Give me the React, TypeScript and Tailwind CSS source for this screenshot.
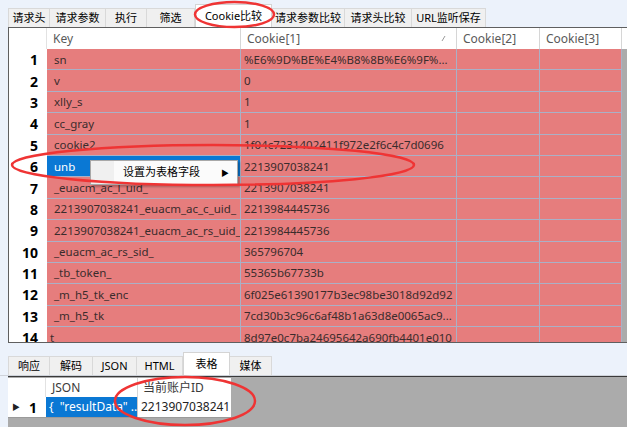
import React from "react";

const topTabs = [
  { label: "请求头", w: "w-[42px]" },
  { label: "请求参数", w: "w-[56px]" },
  { label: "执行", w: "w-[41px]" },
  { label: "筛选", w: "w-[48px]" },
  { label: "Cookie比较", w: "w-[77px]", active: true },
  { label: "请求参数比较", w: "w-[73px]" },
  { label: "请求头比较", w: "w-[67px]" },
  { label: "URL监听保存", w: "w-[74px]" },
];

const bottomTabs = [
  { label: "响应", w: "w-[42px]" },
  { label: "解码", w: "w-[43px]" },
  { label: "JSON", w: "w-[44px]" },
  { label: "HTML", w: "w-[46px]" },
  { label: "表格", w: "w-[47px]", active: true },
  { label: "媒体", w: "w-[42px]" },
];

const rows: [string, string][] = [
  ["sn", "%E6%9D%BE%E4%B8%8B%E6%9F%..."],
  ["v", "0"],
  ["xlly_s", "1"],
  ["cc_gray", "1"],
  ["cookie2", "1f04c7231402411f972e2f6c4c7d0696"],
  ["unb", "2213907038241"],
  ["_euacm_ac_l_uid_", "2213907038241"],
  ["2213907038241_euacm_ac_c_uid_", "2213984445736"],
  ["2213907038241_euacm_ac_rs_uid_", "2213984445736"],
  ["_euacm_ac_rs_sid_", "365796704"],
  ["_tb_token_", "55365b67733b"],
  ["_m_h5_tk_enc", "6f025e61390177b3ec98be3018d92d92"],
  ["_m_h5_tk", "7cd30b3c96c6af48b1a63d8e0065ac9..."],
  ["t", "8d97e0c7ba24695642a690fb4401e010"],
];

function Tab({ label, w, active }: { label: string; w: string; active?: boolean }) {
  if (active) {
    return (
      <div
        className={`${w} h-[23px] bg-white border border-b-0 border-[#d4d4d4] flex items-center justify-center text-[11px] text-black relative z-10`}
      >
        {label}
      </div>
    );
  }
  return (
    <div
      className={`${w} h-[19px] bg-[#f0f0f0] border border-b-0 border-l-0 first:border-l border-[#d9d9d9] flex items-center justify-center text-[11px] text-black`}
    >
      {label}
    </div>
  );
}

function SortMark() {
  return (
    <svg width="5" height="7" viewBox="0 0 5 7" className="mr-[10px]">
      <line x1="1" y1="6" x2="4" y2="1" stroke="#9a9a9a" strokeWidth="1" />
    </svg>
  );
}

export default function App() {
  return (
    <div className="w-[627px] h-[427px] bg-[#ecf2fb] relative overflow-hidden flex flex-col font-['Noto_Sans','Noto_Sans_CJK_SC',sans-serif]">
      {/* top tabs */}
      <div className="h-[27px] flex items-end pl-[8px] shrink-0">
        {topTabs.map((t) => (
          <Tab key={t.label} {...t} />
        ))}
      </div>

      {/* cookie grid */}
      <div className="ml-[8px] h-[316px] shrink-0 border-t border-l border-b border-[#5f5f5f] bg-[#ababab] overflow-hidden">
        <div className="flex h-[21px] bg-white text-[12px] text-[#5a5a5a]">
          <div className="w-[38px] border-r border-[#e2e2e2]" />
          <div className="w-[194px] border-r border-[#d6d6d6] flex items-center pl-[6px]">Key</div>
          <div className="w-[216px] border-r border-[#d6d6d6] flex items-center justify-between pl-[6px]">
            <span>Cookie[1]</span>
            <SortMark />
          </div>
          <div className="w-[83px] border-r border-[#d6d6d6] flex items-center pl-[6px]">Cookie[2]</div>
          <div className="w-[82px] border-r border-[#d6d6d6] flex items-center pl-[6px]">Cookie[3]</div>
        </div>
        {rows.map(([k, v], i) => {
          const selected = i === 5;
          return (
            <div key={i} className="flex h-[21.4px] text-[11.5px]">
              <div className="w-[38px] shrink-0 bg-white flex items-center justify-end pr-[9px] text-[14px] font-bold text-black font-['Open_Sans',sans-serif]">
                {i + 1}
              </div>
              <div
                className={`w-[194px] shrink-0 border-r border-b border-[#aab0c6] flex items-center truncate ${
                  i === 13 ? "pl-[3px]" : "pl-[7px]"
                } ${selected ? "bg-[#0a78d4] text-white" : "bg-[#e67d7d] text-[#3a2c2c]"}`}
              >
                {k}
              </div>
              <div className="w-[216px] shrink-0 border-r border-b border-[#aab0c6] bg-[#e67d7d] text-[#3a2c2c] flex items-center pl-[3px] truncate">
                {v}
              </div>
              <div className="w-[83px] shrink-0 border-r border-b border-[#aab0c6] bg-[#e67d7d]" />
              <div className="w-[82px] shrink-0 border-r border-b border-[#aab0c6] bg-[#e67d7d]" />
            </div>
          );
        })}
      </div>

      {/* bottom tabs */}
      <div className="h-[33px] shrink-0 flex items-end pl-[8px] border-b border-[#cfd3da]">
        {bottomTabs.map((t) => (
          <Tab key={t.label} {...t} />
        ))}
      </div>

      {/* table panel */}
      <div className="ml-[8px] flex-1 bg-[#ababab] border-t border-[#3a3a3a]">
        <div className="w-[223px] mt-px">
          <div className="flex h-[19px] bg-white text-[12px] text-[#3a3a3a]">
            <div className="w-[38px] border-r border-[#e2e2e2]" />
            <div className="w-[92px] border-r border-[#d6d6d6] flex items-center pl-[6px]">JSON</div>
            <div className="w-[93px] flex items-center pl-[5px]">当前账户ID</div>
          </div>
          <div className="flex h-[21px] text-[12px] border-b border-[#9a9a9a]">
            <div className="w-[38px] bg-white flex items-center justify-between pl-[4px] pr-[9px]">
              <span className="text-[8px] text-[#222]">▶</span>
              <span className="text-[14px] font-bold text-black font-['Open_Sans',sans-serif]">1</span>
            </div>
            <div className="w-[92px] bg-[#0a78d4] text-white flex items-center pl-[3px] whitespace-pre overflow-hidden border-r border-[#c8c8c8]">
              {'{  "resultData" ..'}
            </div>
            <div className="w-[93px] bg-white text-[#222] flex items-center pl-[3px]">2213907038241</div>
          </div>
        </div>
      </div>

      {/* context menu */}
      <div className="absolute left-[90px] top-[160px] w-[148px] h-[25px] bg-[#fbfbfb] border border-[#a8a8a8] shadow-[2px_2px_2px_rgba(0,0,0,0.25)] flex items-center text-[11px] text-black">
        <div className="w-[23px] h-full bg-[#f0f0f0]" />
        <span className="ml-[9px] flex-1">设置为表格字段</span>
        <span className="text-[8px] mr-[8px]">▶</span>
      </div>

      {/* red annotation marks */}
      <svg className="absolute inset-0 z-20 pointer-events-none" width="627" height="427">
        <ellipse cx="234.5" cy="14.5" rx="39.5" ry="12.5" fill="none" stroke="#ef3434" strokeWidth="2.5" />
        <ellipse cx="213" cy="165" rx="201" ry="20" fill="none" stroke="#ef3434" strokeWidth="2.5" />
        <ellipse cx="185" cy="401" rx="70" ry="24" fill="none" stroke="#ef3434" strokeWidth="2.5" />
      </svg>
    </div>
  );
}
